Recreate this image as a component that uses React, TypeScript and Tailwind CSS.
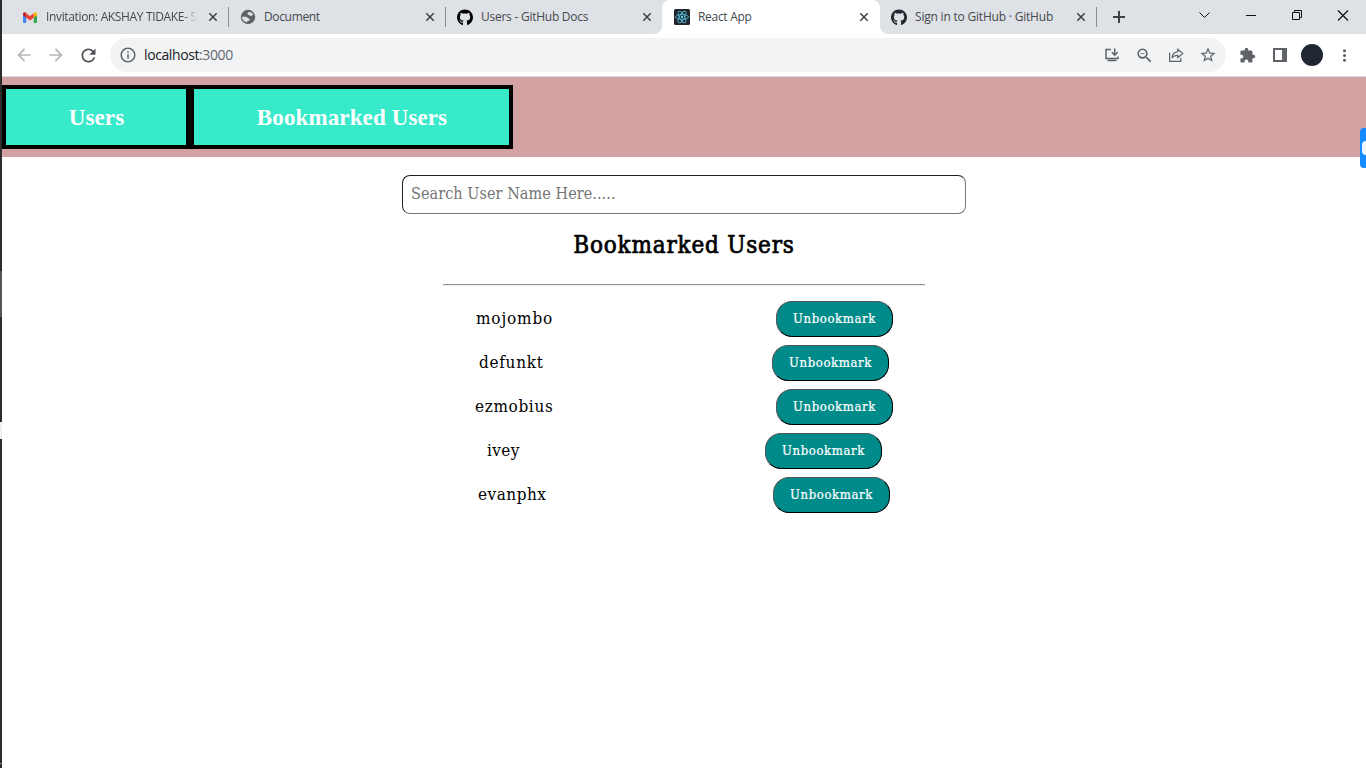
import React from "react";
import {
  MdArrowBack, MdArrowForward, MdRefresh, MdInfoOutline, MdStarBorder,
  MdExtension, MdMoreVert, MdZoomOut,
} from "react-icons/md";
import { FaGithub } from "react-icons/fa";

const GmailIcon = () => (
  <svg width="14" height="11" viewBox="0 0 28 22">
    <path d="M0 4v16a2 2 0 0 0 2 2h4.500V9z" fill="#4285f4" />
    <path d="M28 4v16a2 2 0 0 1-2 2h-4.500V9z" fill="#34a853" />
    <path d="M0 3.500v3l6.500 5V3L5 1.200C3 -.4 0 1 0 3.500z" fill="#c5221f" />
    <path d="M28 3.500v3l-6.500 5V3L23 1.200C25 -.4 28 1 28 3.500z" fill="#fbbc04" />
    <path d="M6.500 2.300L14 8l7.500-5.700v9.200L14 17l-7.500-5.500z" fill="#ea4335" />
  </svg>
);

const GlobeIcon = () => (
  <svg width="16" height="16" viewBox="0 0 16 16">
    <circle cx="8" cy="8" r="7.200" fill="#5f6368" />
    <path d="M2 7.700h3.800c1.700 0 1.600 1.700 3 1.700 1.100.1 1.100 1.300.4 2-.9.700-2.500.400-2.600 1.900-2.700-.6-4.600-2.900-4.600-5.600zM8.200 3.200c1.900-.7 3.800.4 4.900 2-1 .3-.7 1.600-1.800 1.700-1.400.1-1.100-1-2.500-1-1.200 0-1.700-1.900-.6-2.700z" fill="#dee1e6" />
  </svg>
);

const ReactIcon = () => (
  <svg width="16" height="16" viewBox="0 0 16 16">
    <rect width="16" height="16" rx="1.500" fill="#20232a" />
    <g fill="none" stroke="#4fb6d0" strokeWidth="0.900">
      <ellipse cx="8" cy="8" rx="6.500" ry="2.500" />
      <ellipse cx="8" cy="8" rx="6.500" ry="2.500" transform="rotate(60 8 8)" />
      <ellipse cx="8" cy="8" rx="6.500" ry="2.500" transform="rotate(120 8 8)" />
    </g>
    <circle cx="8" cy="8" r="1.200" fill="#61dafb" />
  </svg>
);

const CloseIcon = () => (
  <svg className="ml-[8px] shrink-0" width="12" height="12" viewBox="0 0 12 12" stroke="#3c4043" strokeWidth="1.500">
    <path d="M2.300 2.300l7.400 7.400M9.700 2.300l-7.400 7.400" />
  </svg>
);

type TabProps = { icon: React.ReactNode; title: string; text: string; active?: boolean; divider?: boolean };

const Tab = ({ icon, title, text, active, divider }: TabProps) => (
  <div className={`relative flex h-[34px] shrink-0 items-center ${active ? "-ml-px w-[218px] rounded-t-lg bg-white pl-[12px]" : "w-[217px] pl-[11px]"}`}>
    <span className="flex w-4 shrink-0 justify-center">{icon}</span>
    <span className={`ml-2 block w-[152px] overflow-hidden whitespace-nowrap text-[12px] leading-[18px] text-[#45494d] ${text}`}>{title}</span>
    <CloseIcon />
    {divider && <span className="ml-auto h-5 w-px bg-[#868b90]" />}
    {active && (
      <>
        <svg className="absolute bottom-0 -left-2" width="8" height="8"><path d="M8 0v8H0a8 8 0 0 0 8-8z" fill="#fff" /></svg>
        <svg className="absolute -right-2 bottom-0" width="8" height="8"><path d="M0 0v8h8a8 8 0 0 1-8-8z" fill="#fff" /></svg>
      </>
    )}
  </div>
);

const TabStrip = () => (
  <div className="flex h-[34px] bg-[#dee1e6] pl-[10px]">
    <Tab icon={<span className="-ml-[2px]"><GmailIcon /></span>} divider text="-indent-px tracking-[-0.35px] [mask-image:linear-gradient(to_right,black_136px,transparent_150px)]" title="Invitation: AKSHAY TIDAKE- S" />
    <Tab icon={<GlobeIcon />} divider text="tracking-[-0.35px]" title="Document" />
    <Tab icon={<FaGithub size={17} color="#000" />} text="tracking-[-0.25px]" title="Users - GitHub Docs" />
    <Tab icon={<ReactIcon />} active text="tracking-[-0.3px]" title="React App" />
    <Tab icon={<FaGithub size={17} color="#24292f" />} divider text="tracking-[-0.2px]" title="Sign in to GitHub · GitHub" />
    <div className="flex h-[34px] flex-1 items-center pl-[16px]">
      <svg width="12" height="12" stroke="#3c4043" strokeWidth="2"><path d="M6 0v12M0 6h12" /></svg>
      <svg className="-mt-[5px] ml-auto mr-[16px]" width="152" height="14" viewBox="0 0 152 14" fill="none" stroke="#111" strokeWidth="1">
        <path d="M1.500 4.500L6.500 9.500L11.500 4.500" />
        <path d="M48 7.500H58" />
        <path d="M94.500 4.500h7v7h-7zM96.500 4.500v-2h7v7h-2" />
        <path d="M140 2.500l10 10M150 2.500l-10 10" strokeWidth="1.200" />
      </svg>
    </div>
  </div>
);

const InstallIcon = () => (
  <svg width="16" height="16" viewBox="0 0 16 16" fill="none" stroke="#5f6368" strokeWidth="1.500">
    <path d="M7 2.500H2v9h12V9.500M3.500 13.500h9" />
    <path d="M10.700 1.500v6.500M7.800 5.300l2.900 2.900 2.900-2.900" />
  </svg>
);

const ShareIcon = () => (
  <svg width="16" height="16" viewBox="0 0 16 16" fill="none" stroke="#5f6368" strokeWidth="1.200">
    <path d="M1.600 5.500v8.800h11.200V11" />
    <path d="M9.800 2.300L14.700 6.500L9.800 10.700V8.300C7 8.300 5.200 9.200 4 11c.3-3.400 2.300-5.900 5.800-6.300z" />
  </svg>
);

const Toolbar = () => (
  <div className="flex h-[43px] items-center border-b border-[#d5dade] bg-white pl-[12px] pr-[11px]">
    <MdArrowBack size={20} color="#b5b7ba" />
    <MdArrowForward className="ml-3" size={20} color="#b5b7ba" />
    <MdRefresh className="ml-3" size={21} color="#50545a" />
    <div className="ml-[11px] flex h-[34px] w-[1116px] items-center gap-[14px] rounded-full bg-[#f1f3f4] pl-[9px] pr-[9px]">
      <div className="flex flex-1 items-center">
        <MdInfoOutline size={18} color="#5f6368" />
        <span className="ml-[7px] text-[14px] leading-5 tracking-[-0.4px] text-[#202124]">localhost<span className="text-[#64686d]">:3000</span></span>
      </div>
      <InstallIcon />
      <MdZoomOut className="ml-px" size={19} color="#5f6368" />
      <ShareIcon />
      <MdStarBorder className="ml-px" size={18} color="#5f6368" />
    </div>
    <MdExtension className="ml-[13px]" size={17} color="#5f6368" />
    <svg className="ml-[17px]" width="14" height="14"><path d="M0 0h14v14H0zM2 2v10h7V2z" fill="#5f6368" fillRule="evenodd" /></svg>
    <span className="ml-[14px] size-[22px] rounded-full bg-[#202733]" />
    <MdMoreVert className="ml-[12px]" size={19} color="#5f6368" />
  </div>
);

const serif = "font-['DejaVu_Serif_Condensed','DejaVu_Serif',serif]";

const users = [
  { name: "mojombo", indent: "pl-[33px]", width: "w-[77px]", gap: "ml-[223px]", spacing: "tracking-[0.85px]" },
  { name: "defunkt", indent: "pl-[36px]", width: "w-[64px]", gap: "ml-[229px]", spacing: "tracking-[0.7px]" },
  { name: "ezmobius", indent: "pl-[32px]", width: "w-[78px]", gap: "ml-[223px]", spacing: "tracking-[0.65px]" },
  { name: "ivey", indent: "pl-[44px]", width: "w-[33px]", gap: "ml-[245px]", spacing: "tracking-[0.4px]" },
  { name: "evanphx", indent: "pl-[35px]", width: "w-[69px]", gap: "ml-[226px]", spacing: "tracking-[0.5px]" },
];

export default function App() {
  return (
    <div className="relative flex h-[768px] w-[1366px] overflow-hidden bg-white font-['Open_Sans','Noto_Sans',sans-serif]">
      <div className="flex w-[2px] shrink-0 flex-col bg-[#2c2c2e]">
        <span className="mt-[271px] h-[46px] bg-[#555]" />
        <span className="mt-[105px] h-[17px] bg-[#f0f0f0]" />
        <span className="mt-[324px] h-px bg-[#888]" />
      </div>
      <div className="flex-1">
        <TabStrip />
        <Toolbar />
        <nav className="flex h-20 items-center bg-[#d3a1a1] font-['Liberation_Serif',serif] text-[23px] font-bold tracking-[0.12px] text-white">
          <a className="flex h-16 w-[188px] items-center justify-center border-4 border-black bg-[#36eaca] pt-[2px] pl-px">Users</a>
          <a className="flex h-16 w-[323px] items-center justify-center border-4 border-black bg-[#36eaca] pt-[2px] pl-px">Bookmarked Users</a>
        </nav>
        <main className={`flex flex-col items-center pt-[18px] text-black ${serif}`}>
          <input
            className="h-[39px] w-[564px] rounded-[8px] border border-t-[#202020] border-r-[#767676] border-b-[#767676] border-l-[#202020] px-[8px] pb-[3px] text-[16px] tracking-[0.08px] placeholder:text-[#757575]"
            placeholder="Search User Name Here....."
          />
          <h2 className="mt-[15px] h-8 whitespace-nowrap text-[24px] leading-8 font-normal tracking-[0.8px] [-webkit-text-stroke:0.7px_black]">Bookmarked Users</h2>
          <hr className="mt-[23px] h-[2px] w-[482px] border-t border-b border-t-[#929292] border-b-[#eee]" />
          <ul className="mt-[15px] flex w-[482px] flex-col gap-2">
            {users.map((u) => (
              <li key={u.name} className={`flex h-9 items-center ${u.indent}`}>
                <span className={`-mt-px whitespace-nowrap text-[17px] ${u.width} ${u.spacing}`}>{u.name}</span>
                <button className={`h-9 w-[117px] rounded-[16px] border border-t-[#555] border-r-black border-b-black border-l-[#555] bg-[#008b8b] pb-px text-[13px] tracking-[0.6px] text-white [-webkit-text-stroke:0.2px_white] ${u.gap}`}>Unbookmark</button>
              </li>
            ))}
          </ul>
        </main>
      </div>
      <div className="absolute top-[128px] right-0 flex h-10 w-[6px] items-center justify-end rounded-l-[4px] bg-[#168bff]">
        <span className="h-[14px] w-1 rounded-l-[4px] bg-[#eef6ff]" />
      </div>
    </div>
  );
}
